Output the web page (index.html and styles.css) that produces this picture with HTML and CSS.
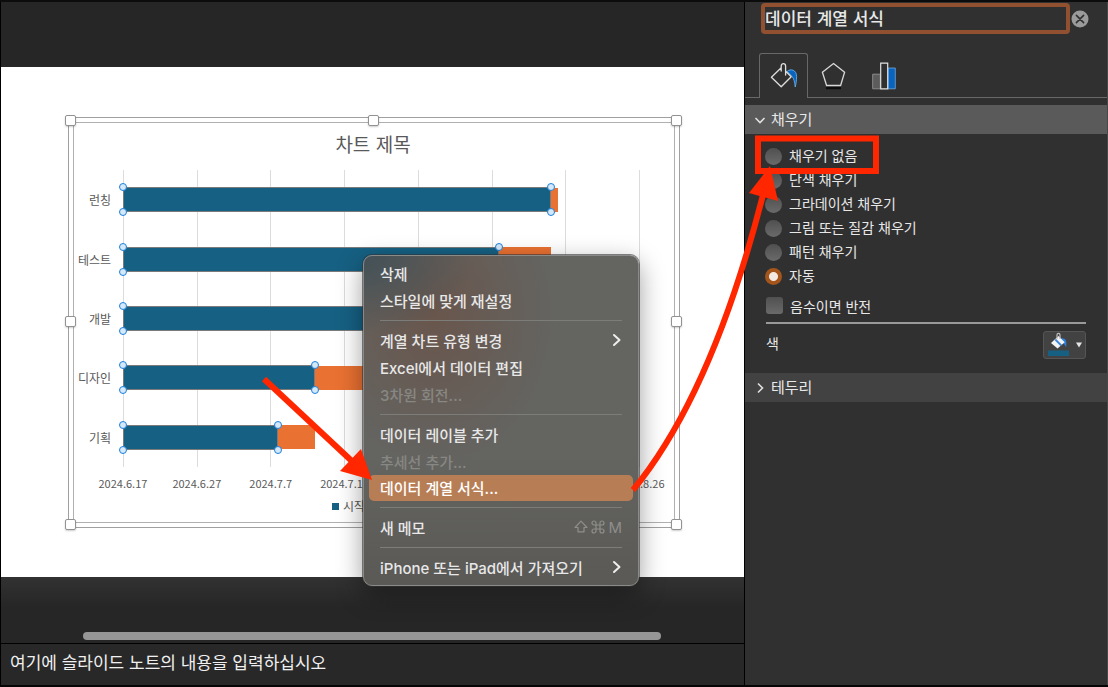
FILE: index.html
```html
<!DOCTYPE html>
<html lang="ko">
<head>
<meta charset="utf-8">
<title>데이터 계열 서식</title>
<link rel="stylesheet" href="styles.css">
</head>
<body>
<div class="app">
  <main class="editor">
    <div class="canvas">
      <section class="slide">
        <figure class="chart">
          <i class="grip nw"></i><i class="grip n"></i><i class="grip ne"></i><i class="grip w"></i>
          <i class="grip e"></i><i class="grip sw"></i><i class="grip s"></i><i class="grip se"></i>
          <div class="chart-area">
            <figcaption class="chart-title">차트 제목</figcaption>
            <div class="plot">
              <div class="categories"><span>런칭</span><span>테스트</span><span>개발</span><span>디자인</span><span>기획</span></div>
              <div class="tracks">
                <div class="track"><div class="start" style="width:calc(58 / 70 * 100%)"><i></i><i></i><i></i><i></i></div><div class="term" style="width:calc(1 / 70 * 100%)"></div></div>
                <div class="track"><div class="start" style="width:calc(51 / 70 * 100%)"><i></i><i></i><i></i><i></i></div><div class="term" style="width:calc(7 / 70 * 100%)"></div></div>
                <div class="track"><div class="start" style="width:calc(41 / 70 * 100%)"><i></i><i></i><i></i><i></i></div><div class="term" style="width:calc(10 / 70 * 100%)"></div></div>
                <div class="track"><div class="start" style="width:calc(26 / 70 * 100%)"><i></i><i></i><i></i><i></i></div><div class="term" style="width:calc(15 / 70 * 100%)"></div></div>
                <div class="track"><div class="start" style="width:calc(21 / 70 * 100%)"><i></i><i></i><i></i><i></i></div><div class="term" style="width:calc(5 / 70 * 100%)"></div></div>
              </div>
            </div>
            <div class="axis"><span>2024.6.17</span><span>2024.6.27</span><span>2024.7.7</span><span>2024.7.17</span><span></span><span></span><span></span><span>2024.8.26</span></div>
            <div class="legend"><span class="key">시작</span></div>
          </div>
        </figure>
      </section>
      <div class="scroll-row"><div class="scroll-thumb"></div></div>
    </div>
    <div class="notes">여기에 슬라이드 노트의 내용을 입력하십시오</div>
  </main>

  <aside class="panel">
    <header class="panel-head">
      <input class="panel-title" type="text" value="데이터 계열 서식" aria-label="창 제목">
      <button class="close" type="button" aria-label="닫기"><svg width="18" height="18" viewBox="0 0 18 18"><circle cx="9" cy="9" r="8.500" fill="#9b9b9b"/><path d="M5.400 5.400l7.200 7.200M12.600 5.400l-7.200 7.200" stroke="#303030" stroke-width="1.600" stroke-linecap="round"/></svg></button>
    </header>
    <nav class="tabs">
      <button class="tab active" type="button" aria-label="채우기 및 선">
        <svg width="28" height="28" viewBox="0 0 28 28" fill="none"><path d="M17.200 9.300C20.500 6.500 26.500 7.500 26.600 14.500C26.600 18.500 26 22 25.200 25C24.800 20.500 24 16.500 22 14.500z" fill="#0a64bd" stroke="#6cb8f2" stroke-width=".8"/><path d="M11.200 5.800L1.400 15.200L11.200 24.800L21.200 14.800L16 9.500M11.200 9V4C11.200 .8 15.600 .8 15.600 4V13" stroke="#dedede" stroke-width="1.300" stroke-linejoin="round" stroke-linecap="round"/></svg>
      </button>
      <button class="tab" type="button" aria-label="효과">
        <svg width="28" height="28" viewBox="0 0 28 28" fill="none"><path d="M7 26h15" stroke="#0d0d0d" stroke-width="2.500"/><path d="M14.500 1.500L25.600 10.300 21.600 23.500H7.600L3.400 10.300z" stroke="#d8d8d8" stroke-width="1.300"/></svg>
      </button>
      <button class="tab" type="button" aria-label="계열 옵션">
        <svg width="28" height="28" viewBox="0 0 28 28"><path d="M3.700 12.200h7.600v14.600H3.700z" fill="#5c5c5c" stroke="#8b8b8b"/><path d="M19 6h7.300v20.800H19z" fill="#0a64bd" stroke="#7db6e8" stroke-width=".7"/><path d="M11.700 1.100h7v25.700h-7z" fill="#303030" stroke="#e2e2e2" stroke-width="1.200"/></svg>
      </button>
    </nav>

    <button class="section-head open" type="button"><svg width="12" height="12" viewBox="0 0 12 12"><path d="M1.500 4l4.500 4.500L10.500 4" fill="none" stroke="#e0e0e0" stroke-width="1.600"/></svg><span>채우기</span></button>
    <div class="section-body">
      <label class="option"><input type="radio" name="fill">채우기 없음</label>
      <label class="option"><input type="radio" name="fill">단색 채우기</label>
      <label class="option"><input type="radio" name="fill">그라데이션 채우기</label>
      <label class="option"><input type="radio" name="fill">그림 또는 질감 채우기</label>
      <label class="option"><input type="radio" name="fill">패턴 채우기</label>
      <label class="option"><input type="radio" name="fill" checked>자동</label>
      <label class="option invert"><input type="checkbox">음수이면 반전</label>
      <div class="color-row">
        <span>색</span>
        <button class="color-button" type="button" aria-label="색">
          <svg width="24" height="26" viewBox="0 0 24 26"><path d="M14 6.500c4-1 6.500 2 5 9-1-2.500-2-4-4-5z" fill="#2d7ddd"/><path d="M4 11L11.500 4l6.200 6.200-7.200 6.300z" fill="#f4f4f4"/><path d="M8.300 7.500l6 6" stroke="#3c86dc" stroke-width="1.800"/><path d="M10 7V3c0-2.200 3-2.200 3 0v4" fill="none" stroke="#bdbdbd" stroke-width="1.200"/><path d="M1 18.500h21V24H1z" fill="#166083"/></svg>
          <svg width="8" height="6" viewBox="0 0 8 6"><path d="M1 .5h6L4 5.500z" fill="#e6e6e6"/></svg>
        </button>
      </div>
    </div>
    <button class="section-head" type="button"><svg width="12" height="12" viewBox="0 0 12 12"><path d="M4 1.500L8.500 6 4 10.500" fill="none" stroke="#e0e0e0" stroke-width="1.600"/></svg><span>테두리</span></button>
  </aside>
</div>

<div class="menu" role="menu">
  <button type="button" role="menuitem">삭제</button>
  <button type="button" role="menuitem">스타일에 맞게 재설정</button>
  <hr>
  <button type="button" role="menuitem">계열 차트 유형 변경<svg width="10" height="14" viewBox="0 0 10 14"><path d="M2 2l5.500 5L2 12" fill="none" stroke="#eee" stroke-width="2" stroke-linecap="round" stroke-linejoin="round"/></svg></button>
  <button type="button" role="menuitem">Excel에서 데이터 편집</button>
  <button type="button" role="menuitem" disabled>3차원 회전...</button>
  <hr>
  <button type="button" role="menuitem">데이터 레이블 추가</button>
  <button type="button" role="menuitem" disabled>추세선 추가...</button>
  <button type="button" role="menuitem" class="current">데이터 계열 서식...</button>
  <hr>
  <button type="button" role="menuitem">새 메모
    <span class="shortcut">
      <svg width="14" height="14" viewBox="0 0 14 14" fill="none" stroke="currentColor" stroke-width="1.200" stroke-linejoin="round"><path d="M7 1.200L13 7.500H10v4.300H4V7.500H1z"/></svg>
      <svg width="14" height="14" viewBox="0 0 14 14" fill="none" stroke="currentColor" stroke-width="1.200"><path d="M5 5V3a2 2 0 1 0-2 2h8a2 2 0 1 0-2-2v8a2 2 0 1 0 2-2H3a2 2 0 1 0 2 2z"/></svg>
      <span>M</span>
    </span>
  </button>
  <hr>
  <button type="button" role="menuitem">iPhone 또는 iPad에서 가져오기<svg width="10" height="14" viewBox="0 0 10 14"><path d="M2 2l5.500 5L2 12" fill="none" stroke="#eee" stroke-width="2" stroke-linecap="round" stroke-linejoin="round"/></svg></button>
</div>

<svg class="marks" width="1108" height="687" viewBox="0 0 1108 687" fill="none" stroke="#ff2600">
  <path d="M264 379L355 464" stroke-width="6"/>
  <path d="M372 480L340 471L361 449z" fill="#ff2600" stroke="none"/>
  <path d="M633 490Q712 394 763 195" stroke-width="6"/>
  <path d="M770 166L749 193L778 201z" fill="#ff2600" stroke="none"/>
  <path d="M758 138.500H876V171H758z" stroke-width="6"/>
</svg>
</body>
</html>
```

FILE: styles.css
```css
* { box-sizing: border-box; }
body {
  margin: 0;
  background: #262626;
  color: #e8e8e8;
  font-family: "Noto Sans CJK KR", "Noto Sans", sans-serif;
  font-size: 14px;
}
button, input { font: inherit; color: inherit; }
button { border: 0; padding: 0; background: none; text-align: left; }
svg { display: block; flex: none; }

.app {
  display: grid;
  grid-template-columns: minmax(0, 1fr) 363px;
  min-height: 100vh;
  border-top: 2px solid #0c0c0c;
  border-bottom: 2px solid #050505;
}

/* Slide editor */
.editor {
  display: flex;
  flex-direction: column;
  border-left: 1px solid #000;
  border-right: 1px solid #000;
}
.canvas {
  flex: 1;
  display: flex;
  flex-direction: column;
  padding-top: 65px;
  background: linear-gradient(#262626 560px, #323232 575px, #262626 605px);
}
.slide { padding: 50px 64px 49px 67px; background: #fff; }
.chart {
  position: relative;
  margin: 0;
  padding: 4px;
  border: 1px solid #a0a0a0;
  color: #595959;
}
.chart-area { border: 1px solid #b0b0b0; padding-right: 34px; }
.grip {
  position: absolute;
  width: 11px;
  height: 11px;
  background: #fff;
  border: 1px solid #929292;
  border-radius: 2px;
  box-shadow: 0 1px 2px #0003;
}
.nw, .n, .ne { top: -3px; }
.sw, .s, .se { bottom: -3px; }
.w, .e { top: calc(50% - 7px); }
.nw, .w, .sw { left: -4px; }
.ne, .e, .se { right: -3px; }
.n, .s { left: calc(50% - 6px); }

.chart-title {
  padding: 7px 0 12px 32px;
  font-size: 19px;
  line-height: 28px;
  text-align: center;
}
.plot { display: grid; grid-template-columns: 49px 1fr; height: 297px; }
.categories, .tracks { display: grid; grid-template-rows: repeat(5, 1fr); align-items: center; }
.categories { padding-right: 12px; font-size: 12px; text-align: right; }
.tracks {
  border-left: 1px solid #dcdcdc;
  background: repeating-linear-gradient(90deg, transparent 0, transparent calc(100% / 7 - 1px), #dcdcdc calc(100% / 7 - 1px), #dcdcdc calc(100% / 7));
}
.track { display: flex; height: 26px; align-items: center; margin: 0 1px 0 -1px; }
.start { position: relative; height: 25px; background: #166083; border: 1px solid #7b7b7b; }
.term { height: 24px; background: #e97132; }
.start i {
  position: absolute;
  width: 8px;
  height: 8px;
  border: 1px solid #1b80de;
  border-radius: 50%;
  background: #d4e8f8;
}
.start i:nth-child(-n+2) { left: -5px; }
.start i:nth-child(n+3) { right: -5px; }
.start i:nth-child(odd) { top: -5px; }
.start i:nth-child(even) { bottom: -5px; }
.axis {
  display: grid;
  grid-template-columns: repeat(8, 1fr);
  margin: 8px -37px 0 12px;
  font-size: 11px;
  line-height: 16px;
  text-align: center;
}
.legend { display: flex; padding: 6px 0 7px 258px; font-size: 12px; line-height: 18px; }
.key { display: flex; align-items: center; gap: 4px; }
.key::before { content: ""; width: 7px; height: 7px; background: #166083; }

.scroll-row { margin-top: auto; padding: 0 83px 3px 82px; }
.scroll-thumb { height: 8px; border-radius: 4px; background: #969696; }
.notes {
  height: 42px;
  padding: 0 9px;
  border-top: 1px solid #000;
  background: #282828;
  color: #f0f0f0;
  font-size: 17px;
  line-height: 35px;
}

/* Format panel */
.panel { background: #303030; border-right: 1px solid #484848; }
.panel-head { display: flex; align-items: center; gap: 1px; padding: 1px 18px 0 16px; }
.panel-title {
  flex: 1;
  min-width: 0;
  height: 31px;
  padding: 0 0 2px;
  border: 4px solid #91502f;
  border-radius: 4px;
  background: #303030;
  font-size: 17px;
  font-weight: 500;
}
.tabs {
  display: flex;
  margin-top: 19px;
  padding-left: 14px;
  background: linear-gradient(#686868, #686868) bottom / 100% 1px no-repeat;
}
.tab { display: grid; place-items: center; width: 50px; height: 45px; border: 1px solid transparent; border-bottom: 0; }
.tab.active { width: 49px; border-color: #686868; border-radius: 3px 3px 0 0; background: #303030; }
.section-head {
  display: flex;
  align-items: center;
  gap: 5px;
  width: 100%;
  height: 29px;
  padding: 0 9px;
  background: #424242;
  font-size: 15px;
}
.section-head span { padding-bottom: 3px; }
.section-head.open { margin-top: 7px; background: #5a5a5a; }
.section-body { padding: 9px 21px 14px; }
.option { display: flex; align-items: center; gap: 7px; height: 24px; }
.option input {
  appearance: none;
  width: 17px;
  height: 17px;
  margin: 3px 0 0 -1px;
  border-radius: 50%;
  background: linear-gradient(#505050, #6a6a6a);
}
.option input:checked { background: radial-gradient(circle, #f4e9e2 0 4px, #a4551c 5px); }
.option.invert { height: 35px; padding-top: 2px; }
.option.invert input { margin: 0; border-radius: 3px; }
.color-row {
  display: flex;
  justify-content: space-between;
  align-items: center;
  padding-top: 7px;
  border-top: 2px solid #999;
}
.color-row > span { padding-bottom: 4px; }
.color-button {
  display: flex;
  align-items: center;
  justify-content: center;
  gap: 4px;
  width: 43px;
  height: 28px;
  border: 1px solid #555;
  border-radius: 3px;
  background: #424242;
}

/* Context menu */
.menu {
  position: absolute;
  top: 255px;
  left: 363px;
  width: 276px;
  padding: 4px 5px;
  border: 1px solid #8a8a88;
  border-radius: 9px;
  background:
    radial-gradient(ellipse 110px 80px at 0 0, #465257 10%, #46525700),
    radial-gradient(ellipse 120px 150px at 70px 60px, #69564c, #69564c00),
    linear-gradient(#646461 60%, #5a5956);
  box-shadow: 0 0 0 1px #3339, 0 8px 26px #0006;
  font-family: Inter, "Noto Sans CJK KR", sans-serif;
  font-size: 15px;
  font-weight: 500;
}
.menu button {
  display: flex;
  align-items: center;
  justify-content: space-between;
  width: 100%;
  height: 27px;
  padding: 0 11px 1px;
  border-radius: 5px;
  white-space: nowrap;
}
.menu button:disabled { color: #878783; }
.menu .current { height: 26px; background: #b77e55; color: #fff; }
.menu hr { height: 1px; margin: 6px 11px; border: 0; background: #7c7c79; }
.shortcut { display: flex; align-items: center; gap: 3px; color: #8e8e8a; font-weight: 400; }

.marks { position: absolute; top: 0; left: 0; pointer-events: none; }
```
